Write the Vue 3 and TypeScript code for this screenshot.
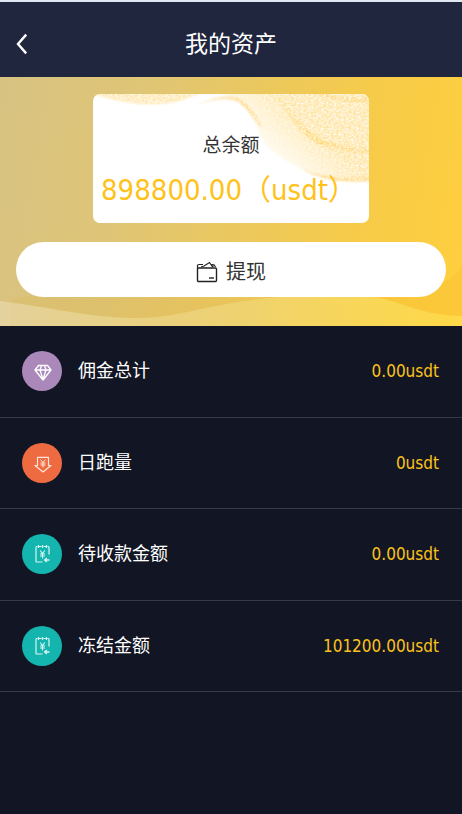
<script setup lang="ts">
type IconName = 'diamond' | 'download' | 'bill'

interface AssetRow {
  label: string
  value: string
  icon: IconName
}

const balance = '898800.00（usdt）'

const rows: AssetRow[] = [
  { label: '佣金总计', value: '0.00usdt', icon: 'diamond' },
  { label: '日跑量', value: '0usdt', icon: 'download' },
  { label: '待收款金额', value: '0.00usdt', icon: 'bill' },
  { label: '冻结金额', value: '101200.00usdt', icon: 'bill' },
]
</script>

<template>
  <div class="page">
    <header class="topbar">
      <button class="back" type="button" aria-label="返回">
        <svg viewBox="0 0 12 22" width="12" height="22" aria-hidden="true">
          <path d="M10.200 1.600 2 11l8.200 9.400" fill="none" stroke="#fff" stroke-width="2.400" />
        </svg>
      </button>
      <h1>我的资产</h1>
    </header>

    <section class="hero">
      <svg class="waves" viewBox="0 0 462 60" preserveAspectRatio="none" aria-hidden="true">
        <defs>
          <linearGradient id="waveFade">
            <stop offset="0" stop-color="#ecdcb4" stop-opacity=".6" />
            <stop offset=".55" stop-color="#f2dc80" stop-opacity=".55" />
            <stop offset="1" stop-color="#ffe858" stop-opacity=".4" />
          </linearGradient>
          <linearGradient id="duneFade">
            <stop offset="0" stop-color="#d7b650" stop-opacity=".25" />
            <stop offset=".6" stop-color="#dcb048" stop-opacity=".2" />
            <stop offset="1" stop-color="#e0b040" stop-opacity="0" />
          </linearGradient>
        </defs>
        <path d="M10 35Q25 29 50 27L330 27V60H10Z" fill="url(#duneFade)" />
        <path d="M462 0C450 18 430 27 360 28C400 32 415 49 462 50Z" fill="#f9b92a" fill-opacity=".3" />
        <path d="M0 35C50 41 90 52 137 52C180 52 210 37 270 32C320 27 350 27 378 32C405 37 420 49 462 50V60H0Z" fill="url(#waveFade)" />
      </svg>

      <div class="card">
        <svg class="card-art" viewBox="0 0 274 129" preserveAspectRatio="none" aria-hidden="true">
          <defs>
            <filter id="grain" filterUnits="userSpaceOnUse" x="-20" y="-20" width="320" height="170" color-interpolation-filters="sRGB">
              <feTurbulence type="fractalNoise" baseFrequency=".4 .55" numOctaves="2" seed="4" result="noise" />
              <feColorMatrix in="noise" values="0 0 0 0 1  0 0 0 0 1  0 0 0 0 1  2 0 0 0 -.7" result="specks" />
              <feGaussianBlur in="SourceGraphic" stdDeviation="1" result="soft" />
              <feComposite in="specks" in2="soft" operator="in" result="cut" />
              <feMerge>
                <feMergeNode in="soft" />
                <feMergeNode in="cut" />
              </feMerge>
            </filter>
            <linearGradient id="sand" gradientUnits="userSpaceOnUse" x1="164" y1="62" x2="205" y2="18">
              <stop offset="0" stop-color="#ffebb8" stop-opacity="0" />
              <stop offset="1" stop-color="#ffe6a8" />
            </linearGradient>
            <linearGradient id="ridge">
              <stop offset="0" stop-color="#ffd878" stop-opacity="0" />
              <stop offset=".4" stop-color="#ffd878" />
              <stop offset="1" stop-color="#ffe09a" />
            </linearGradient>
          </defs>
          <g filter="url(#grain)">
            <path d="M0 -10V0C25 7 40 11 64 10C86 9 92 4 105 0V-10Z" fill="#ffe7b0" />
            <path d="M128 -10H290V86C240 88 222 80 207 74C187 64 170 55 165 38C160 22 155 10 128 0Z" fill="url(#sand)" />
            <path d="M104 11C120 3 134 1 145 4C156 10 163 22 169 34C160 28 155 14 143 7C132 3 118 5 104 11Z" fill="#ffdc92" />
            <path d="M180 0C198 10 200 24 216 37C233 50 254 54 290 54V59C252 60 232 57 216 45C198 32 196 18 176 4Z" fill="url(#ridge)" />
            <path d="M207 74C228 84 248 86 290 80V86C246 90 226 86 207 74Z" fill="#ffd987" />
            <path d="M228 0C246 5 260 6 290 3V7C256 9 238 6 222 0Z" fill="#ffd370" />
          </g>
        </svg>
        <p class="card-label">总余额</p>
        <p class="card-amount">{{ balance }}</p>
      </div>

      <button class="withdraw" type="button">
        <svg viewBox="0 0 22 22" width="22" height="22" fill="none" stroke="#222" aria-hidden="true">
          <rect x="1.500" y="7" width="19" height="13.500" rx="1" stroke-width="1.400" />
          <path d="M1.500 8V4.500Q1.500 3.500 3 3.500H7" stroke-width="1.200" />
          <path d="M5 6 8 5 13.500 1.500 16.500 6M15.500 3.500H17V6M18 3.500 19.500 6" stroke-width="1.100" />
          <path d="M13 17H18" stroke-width="1.400" />
        </svg>
        <span>提现</span>
      </button>
    </section>

    <ul class="list">
      <li v-for="row in rows" :key="row.label" class="row">
        <span class="badge" :class="row.icon">
          <svg v-if="row.icon === 'diamond'" viewBox="0 0 40 40" aria-hidden="true">
            <path d="M16.500 14.500H25.500L29 19 21 29 13 19ZM13 19H29M18 19 21 28.500 24 19M18 19 19.500 14.500M24 19 22.500 14.500" fill="none" stroke="#fff" stroke-width="1.300" stroke-linejoin="round" />
          </svg>
          <svg v-else-if="row.icon === 'download'" viewBox="0 0 40 40" fill="none" stroke="#ffe4d9" aria-hidden="true">
            <path d="M15.500 14.300H26.500V22.500H29L21 29 13 22.500H15.500Z" stroke-width="1.200" stroke-linejoin="round" />
            <path d="M18.500 16.500 21 19.500 23.500 16.500M21 19.500V24.500M18.500 20H23.500M18.500 22H23.500" stroke-width="1" />
          </svg>
          <svg v-else viewBox="0 0 40 40" fill="none" stroke="#d8f5f2" aria-hidden="true">
            <path d="M15.500 12.500H14.500Q14 12.500 14 13.500V27.500Q14 28 14.500 28H20.500M17 12.500H19.500M21.500 12.500H24M25.500 12.500H26.500Q27 12.500 27 13.500V20.500M16.500 11V14M20.500 11V14M24.500 11V14" stroke-width="1.200" />
            <path d="M18.200 16.500 20.500 19.500 22.800 16.500M20.500 19.500V24.500M18 20H23M18 22H23" stroke-width="1.100" />
            <path d="M27.500 26H23M24.800 24 22.600 26 24.800 28" stroke-width="1.300" />
          </svg>
        </span>
        <span class="row-label">{{ row.label }}</span>
        <span class="row-value">{{ row.value }}</span>
      </li>
    </ul>
  </div>
</template>

<style>
body {
  margin: 0;
  background: #121624;
}
</style>

<style scoped>
.page {
  min-height: 100vh;
  box-sizing: border-box;
  border-top: 2px solid #e1e7f2;
  background: #121624;
  color: #fff;
  font-family: "DejaVu Sans Condensed", "Noto Sans CJK SC", sans-serif;
}

.topbar {
  display: grid;
  grid-template-columns: 48px 1fr 48px;
  align-items: center;
  height: 75px;
  padding-top: 8px;
  box-sizing: border-box;
  background: #21263f;
}

.back {
  display: flex;
  padding: 8px 16px;
  border: 0;
  background: none;
}

h1 {
  margin: 0;
  font-size: 23px;
  line-height: 32px;
  font-weight: 400;
  text-align: center;
}

.hero {
  position: relative;
  display: flex;
  flex-direction: column;
  align-items: center;
  gap: 19px;
  padding: 17px 16px 29px;
  background: linear-gradient(100deg, #d7c282 0%, #dfc576 28%, #eac860 50%, #f7cb49 76%, #ffcf3d 100%);
}

.waves {
  position: absolute;
  left: 0;
  bottom: 0;
  width: 100%;
  height: 60px;
}

.card {
  position: relative;
  overflow: hidden;
  box-sizing: border-box;
  width: 64%;
  height: 129px;
  padding-top: 36px;
  border-radius: 7px;
  background: #fff;
  text-align: center;
}

.card-art {
  position: absolute;
  inset: 0;
  width: 100%;
  height: 100%;
}

.card-label,
.card-amount {
  position: relative;
  margin: 0;
  white-space: nowrap;
}

.card-label {
  color: #333;
  font-size: 19px;
  line-height: 30px;
}

.card-amount {
  margin-top: 8px;
  padding-right: 4px;
  color: #ffc21a;
  font-size: 29px;
  line-height: 44px;
}

.withdraw {
  position: relative;
  display: flex;
  align-items: center;
  justify-content: center;
  gap: 8px;
  width: 100%;
  height: 55px;
  padding: 4px 0 0;
  border: 0;
  border-radius: 28px;
  background: #fff;
  color: #333;
  font-family: inherit;
  font-size: 20px;
  line-height: 28px;
}

.list {
  display: grid;
  grid-template-rows: repeat(4, 1fr);
  height: 366px;
  margin: 0;
  padding: 0;
  list-style: none;
}

.row {
  display: flex;
  align-items: center;
  padding: 0 23px 0 22px;
  border-bottom: 1px solid #363a48;
}

.badge {
  width: 40px;
  height: 40px;
  border-radius: 50%;
}

.badge svg {
  display: block;
}

.diamond {
  background: #aa89ba;
}

.download {
  background: #ee6b42;
}

.bill {
  background: #14b5af;
}

.row-label {
  flex: 1;
  margin-left: 16px;
  font-size: 18px;
  line-height: 28px;
}

.row-value {
  color: #fcc21b;
  font-size: 17px;
  line-height: 28px;
}
</style>
